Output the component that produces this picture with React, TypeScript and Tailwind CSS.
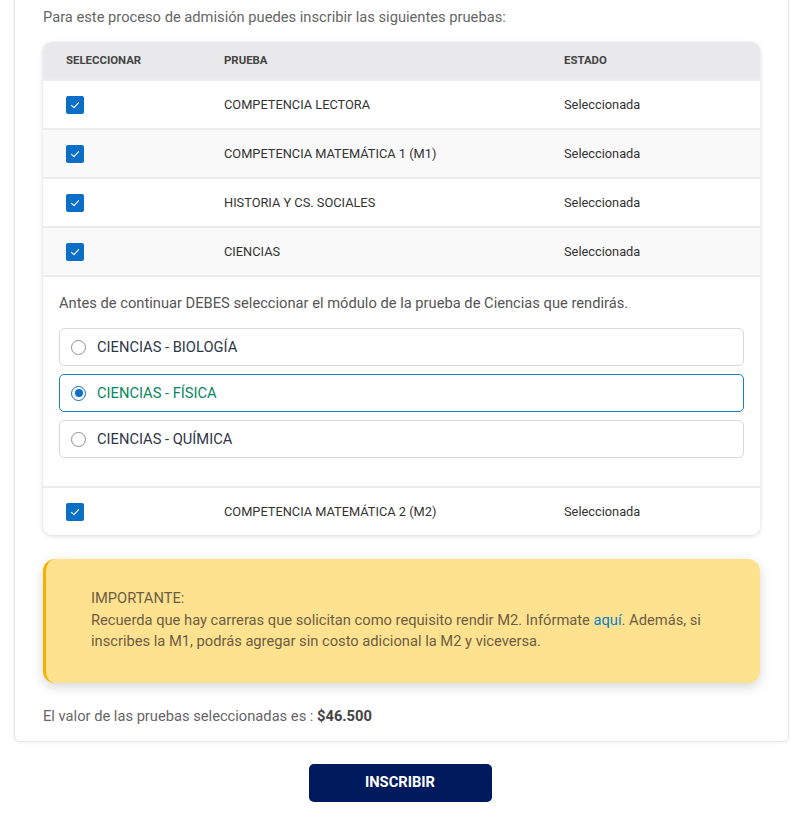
import React from "react";

const font = { fontFamily: "Roboto, 'Liberation Sans', Arial, sans-serif" };

type Row = { name: string };

const topRows: Row[] = [
  { name: "COMPETENCIA LECTORA" },
  { name: "COMPETENCIA MATEMÁTICA 1 (M1)" },
  { name: "HISTORIA Y CS. SOCIALES" },
  { name: "CIENCIAS" },
];

function CheckBox() {
  return (
    <span className="flex h-[18px] w-[18px] items-center justify-center rounded-[2px] bg-[#0b6fc7]">
      <svg width="12" height="12" viewBox="0 0 12 12" fill="none">
        <path d="M2.5 6.3 L5 8.6 L9.6 3.6" stroke="white" strokeWidth="1.1" strokeLinecap="round" strokeLinejoin="round" />
      </svg>
    </span>
  );
}

function TableRow({ name, shaded }: { name: string; shaded: boolean }) {
  return (
    <div className={`flex h-[49px] items-center border-t-2 border-[#ececee] text-[12.8px] text-[#333] ${shaded ? "bg-[#f9f9f9]" : "bg-white"}`}>
      <div className="w-[181px] pl-[23px]">
        <CheckBox />
      </div>
      <div className="w-[340px]">{name}</div>
      <div>Seleccionada</div>
    </div>
  );
}

function Option({ label, checked }: { label: string; checked?: boolean }) {
  return (
    <div
      className={`flex h-[38px] items-center rounded-[5px] border pl-[11px] ${
        checked ? "border-[#1a7fc8]" : "border-[#d9dadd]"
      }`}
    >
      {checked ? (
        <span className="flex h-[15px] w-[15px] items-center justify-center rounded-full border-[1.5px] border-[#0b6fc7]">
          <span className="h-[8px] w-[8px] rounded-full bg-[#0b6fc7]" />
        </span>
      ) : (
        <span className="h-[15px] w-[15px] rounded-full border border-[#8d8f94]" />
      )}
      <span className={`ml-[11px] text-[14.7px] ${checked ? "text-[#08875e]" : "text-[#2d3748]"}`}>{label}</span>
    </div>
  );
}

export default function App() {
  return (
    <div className="min-h-[820px] bg-white" style={font}>
      <div className="-mt-[10px] ml-[14px] w-[775px] rounded-[6px] border border-[#e6e6e6] bg-white px-[28px] pb-[14px] pt-[14px] shadow-[0_1px_3px_rgba(0,0,0,0.06)]">
        <p className="text-[14.7px] leading-[24px] text-[#666]">
          Para este proceso de admisión puedes inscribir las siguientes pruebas:
        </p>

        <div className="mt-[13px] overflow-hidden rounded-[9px] bg-white shadow-[0_1px_4px_rgba(0,0,0,0.16)]">
          <div className="flex h-[37px] items-center bg-[#e9e9eb] text-[11.4px] font-bold text-[#444]">
            <div className="w-[181px] pl-[23px]">SELECCIONAR</div>
            <div className="w-[340px]">PRUEBA</div>
            <div>ESTADO</div>
          </div>

          {topRows.map((r, i) => (
            <TableRow key={r.name} name={r.name} shaded={i % 2 === 1} />
          ))}

          <div className="border-t-2 border-[#ececee] px-[16px] pb-[28px] pt-[14px]">
            <p className="text-[14.7px] leading-[24px] text-[#555]">
              Antes de continuar DEBES seleccionar el módulo de la prueba de Ciencias que rendirás.
            </p>
            <div className="mt-[13px] flex flex-col gap-[8px]">
              <Option label="CIENCIAS - BIOLOGÍA" />
              <Option label="CIENCIAS - FÍSICA" checked />
              <Option label="CIENCIAS - QUÍMICA" />
            </div>
          </div>

          <TableRow name="COMPETENCIA MATEMÁTICA 2 (M2)" shaded={false} />
        </div>

        <div className="mt-[24px] rounded-[12px] border-l-[3px] border-[#f5b000] bg-[#ffe28f] pb-[30px] pl-[45px] pr-[48px] pt-[29px] text-[14.7px] leading-[21.5px] text-[#6b5d45] shadow-[0_4px_12px_rgba(0,0,0,0.16)]">
          <p>IMPORTANTE:</p>
          <p>
            Recuerda que hay carreras que solicitan como requisito rendir M2. Infórmate{" "}
            <span className="text-[#0a7fc4]">aquí</span>. Además, si inscribes la M1, podrás agregar sin costo
            adicional la M2 y viceversa.
          </p>
        </div>

        <p className="mt-[22px] text-[14.7px] leading-[22px] text-[#666]">
          El valor de las pruebas seleccionadas es : <span className="font-bold text-[#444]">$46.500</span>
        </p>
      </div>

      <div className="mt-[22px] flex justify-center">
        <button className="h-[38px] w-[183px] rounded-[5px] bg-[#001a5e] text-[14.7px] font-bold text-white">
          INSCRIBIR
        </button>
      </div>
    </div>
  );
}
